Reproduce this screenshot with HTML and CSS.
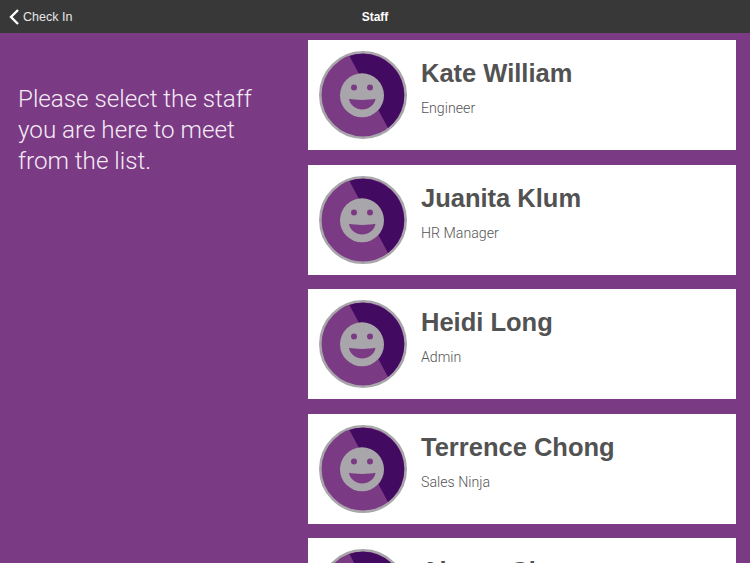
FILE: index.html
```html
<!DOCTYPE html>
<html lang="en">
<head>
<meta charset="utf-8">
<title>Staff</title>
<link rel="stylesheet" href="styles.css">
</head>
<body>
<div class="page">
  <header class="bar">
    <div class="back">
      <svg class="chev" width="12" height="16" viewBox="0 0 12 16"><path d="M10 1 3 8l7 7" fill="none" stroke="#fff" stroke-width="2.400"/></svg>
      <span>Check In</span>
    </div>
    <div class="title">Staff</div>
  </header>
  <main class="main">
    <p class="prompt">Please select the staff you are here to meet from the list.</p>
    <div class="list">
      <div class="card">
        <svg class="avatar" viewBox="0 0 88 88"><use href="#face"/></svg>
        <div class="info"><div class="name">Kate William</div><div class="role">Engineer</div></div>
      </div>
      <div class="card">
        <svg class="avatar" viewBox="0 0 88 88"><use href="#face"/></svg>
        <div class="info"><div class="name">Juanita Klum</div><div class="role">HR Manager</div></div>
      </div>
      <div class="card">
        <svg class="avatar" viewBox="0 0 88 88"><use href="#face"/></svg>
        <div class="info"><div class="name">Heidi Long</div><div class="role">Admin</div></div>
      </div>
      <div class="card">
        <svg class="avatar" viewBox="0 0 88 88"><use href="#face"/></svg>
        <div class="info"><div class="name">Terrence Chong</div><div class="role">Sales Ninja</div></div>
      </div>
      <div class="card">
        <svg class="avatar" viewBox="0 0 88 88"><use href="#face"/></svg>
        <div class="info"><div class="name">Alyssa Chan</div><div class="role">Designer</div></div>
      </div>
    </div>
  </main>
</div>
<svg class="defs" width="0" height="0">
  <defs>
    <g id="face">
      <circle cx="44" cy="44" r="42.700" fill="#7b3a84" stroke="#a9a6ab" stroke-width="2.600"/>
      <path d="M30.400 5 A41.400 41.400 0 0 1 69 77 Z" fill="#420a60"/>
      <circle cx="43" cy="44.300" r="22" fill="#a9a6ab"/>
      <circle cx="35" cy="36.500" r="3" fill="#7b3a84"/>
      <circle cx="51" cy="36.500" r="3" fill="#7b3a84"/>
      <path d="M30 47.800 C36 49.300 50 49.300 56.500 47.800 C55.500 54.500 49.500 58.500 43.200 58.500 C37 58.500 31 54.500 30 47.800 Z" fill="#7b3a84"/>
    </g>
  </defs>
</svg>
</body>
</html>
```
FILE: styles.css
```css
* { box-sizing: border-box; }
html, body { margin: 0; height: 100%; overflow: hidden; }
body { background: #7b3a84; font-family: "Liberation Sans", Arial, sans-serif; }
.page { width: 750px; height: 563px; overflow: hidden; display: flex; flex-direction: column; }
.bar { position: relative; flex: none; height: 33px; background: #383838; color: #fff; display: flex; align-items: center; justify-content: center; }
.back { position: absolute; left: 8px; top: 0; height: 33px; display: flex; align-items: center; gap: 3px; font-size: 12.500px; color: #e6e6e6; }
.chev { display: block; }
.title { font-size: 12px; font-weight: 700; }
.main { flex: 1; min-height: 0; display: flex; align-items: flex-start; }
.prompt { flex: none; width: 308px; margin: 0; padding: 51px 40px 0 18px; color: #f4ecf5; font-family: Roboto, "Liberation Sans", sans-serif; font-weight: 300; font-size: 24.200px; line-height: 31px; }
.list { flex: none; width: 428px; padding-top: 7px; display: flex; flex-direction: column; gap: 14.500px; }
.card { flex: none; height: 110px; background: #fff; display: flex; align-items: center; padding-left: 11px; }
.avatar { flex: none; width: 88px; height: 88px; display: block; }
.info { margin-left: 14px; align-self: flex-start; padding-top: 17px; }
.name { font-size: 25.500px; line-height: 32px; font-weight: 700; color: #525252; }
.role { margin-top: 10px; font-size: 14.200px; line-height: 18px; color: #555; font-family: Roboto, "Liberation Sans", sans-serif; font-weight: 300; }
.defs { position: absolute; }
```
